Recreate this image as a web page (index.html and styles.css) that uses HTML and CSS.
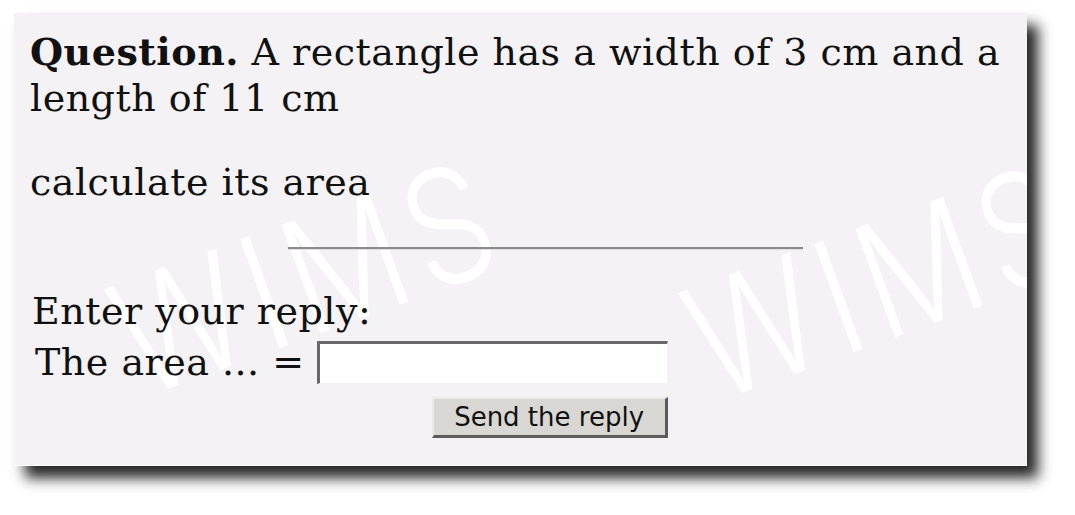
FILE: index.html
```html
<!DOCTYPE html>
<html lang="en">
<head>
<meta charset="utf-8">
<title>WIMS exercise</title>
<link rel="stylesheet" href="styles.css">
</head>
<body>
<div class="page">
  <div class="card">
    <svg class="wm" width="1013" height="452" viewBox="0 0 1013 452" aria-hidden="true">
      <text transform="translate(126 386) rotate(-20) scale(0.95 1.15)">WIMS</text>
      <text transform="translate(700 390) rotate(-20) scale(0.95 1.15)">WIMS</text>
    </svg>
    <p class="para"><b>Question.</b> A rectangle has a width of 3 cm and a length of 11 cm</p>
    <p class="para">calculate its area</p>
    <hr class="rule">
    <div class="form">
      <div class="prompt">Enter your reply:</div>
      <div class="answer-row">
        <span class="label">The area ... =</span>
        <input class="answer" type="text" aria-label="The area">
      </div>
      <div class="send">
        <button class="send-btn" type="button">Send the reply</button>
      </div>
    </div>
  </div>
</div>
</body>
</html>
```
FILE: styles.css
```css
html, body {
  margin: 0;
  padding: 0;
  background: #ffffff;
}

body {
  font-family: "DejaVu Serif", "Liberation Serif", serif;
  color: #111;
  min-height: 515px;
}

.page {
  padding: 13px 0 50px 14px;
}

.card {
  position: relative;
  z-index: 0;
  overflow: hidden;
  box-sizing: border-box;
  width: 1013px;
  height: 453px;
  padding: 16px 16px 0 16px;
  background: #f5f2f5;
  border-bottom: 1px solid #ffffff;
  box-shadow: 11px 12px 13px rgba(0, 0, 0, 0.85);
}

.wm {
  position: absolute;
  left: 0;
  top: 0;
  z-index: -1;
  pointer-events: none;
}

.wm text {
  font-family: "Inter", "DejaVu Sans", sans-serif;
  font-weight: 300;
  font-size: 138px;
  letter-spacing: 10px;
  fill: #ffffff;
}

.para {
  margin: 0 0 38px 0;
  font-size: 38px;
  line-height: 46px;
  letter-spacing: 0.5px;
}

.para b {
  font-weight: bold;
}

.rule {
  margin: 42px 0 0 258px;
  width: 515px;
  height: 0;
  border: 0;
  border-top: 2px solid #8c8a8c;
  border-bottom: 1px solid #e2dfe2;
}

.form {
  width: fit-content;
  margin-top: 38px;
}

.prompt {
  font-size: 38px;
  line-height: 46px;
  letter-spacing: 0.5px;
  padding-left: 2px;
}

.answer-row {
  display: flex;
  align-items: center;
  gap: 12px;
  margin-top: 5px;
  padding-left: 5px;
  font-size: 38px;
  line-height: 46px;
  letter-spacing: 0.5px;
}

.answer {
  box-sizing: border-box;
  width: 351px;
  height: 43px;
  margin: 0;
  padding: 0 6px;
  background: #ffffff;
  border-style: solid;
  border-width: 3px 1px 1px 3px;
  border-color: #6a686a #f3f1f3 #f3f1f3 #6a686a;
  font-size: 24px;
}

.send {
  display: flex;
  justify-content: flex-end;
  margin-top: 12px;
}

.send-btn {
  box-sizing: border-box;
  width: 236px;
  height: 41px;
  margin: 0;
  padding: 0;
  background: #d9d7d3;
  border-style: solid;
  border-width: 2px 3px 3px 2px;
  border-color: #eceae7 #5c5b59 #5c5b59 #eceae7;
  font-family: "DejaVu Sans", "Liberation Sans", sans-serif;
  font-size: 26px;
  color: #111;
  line-height: 1;
}
```
